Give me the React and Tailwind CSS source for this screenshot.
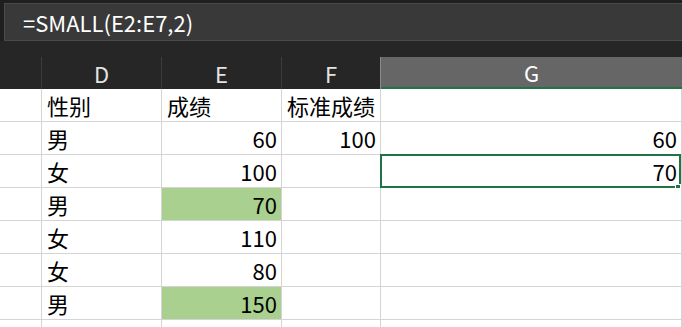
import React from 'react';

const font = { fontFamily: '"Noto Sans CJK SC", "Noto Sans", sans-serif' };

const rows = [
  ['性别', '成绩', '标准成绩', ''],
  ['男', '60', '100', '60'],
  ['女', '100', '', '70'],
  ['男', '70', '', ''],
  ['女', '110', '', ''],
  ['女', '80', '', ''],
  ['男', '150', '', ''],
];

function Cell({ children, right, green, selected }) {
  return (
    <div
      className={`relative h-[33px] border-r border-b border-[#d4d4d4] flex items-center text-[22px] leading-none text-black whitespace-nowrap ${right ? 'justify-end pr-[4px]' : 'pl-[5px]'} ${green ? 'bg-[#a9d08e]' : 'bg-white'}`}
    >
      {children}
      {selected && (
        <>
          <div className="absolute -left-px -top-px right-0 -bottom-px border-2 border-[#217346]" />
          <div className="absolute right-0 -bottom-[3px] w-[6px] h-[6px] bg-[#217346] border border-white" />
        </>
      )}
    </div>
  );
}

export default function App() {
  return (
    <div className="w-[682px] h-[327px] overflow-hidden bg-[#262626]" style={font}>
      {/* Formula bar */}
      <div className="pt-[3px] pl-[4px] bg-[#1f1f1f]">
        <div className="h-[38px] bg-[#393939] border border-r-0 border-[#4a4a4a] flex items-center pl-[18px] text-[22px] leading-none text-white">
          =SMALL(E2:E7,2)
        </div>
      </div>
      <div className="h-[16px] bg-[#262626]" />
      {/* Column headers */}
      <div className="grid grid-cols-[42px_120px_120px_99px_1fr] h-[32px] text-[22px] leading-none">
        <div className="border-r border-[#3c3c3c]" />
        <div className="border-r border-[#3c3c3c] flex items-center justify-center text-[#e3e3e3]">D</div>
        <div className="border-r border-[#3c3c3c] flex items-center justify-center text-[#e3e3e3]">E</div>
        <div className="border-r border-[#8a8a8a] flex items-center justify-center text-[#e3e3e3]">F</div>
        <div className="bg-[#666666] border-b-2 border-[#217346] flex items-center justify-center text-white">G</div>
      </div>
      {/* Grid */}
      <div className="grid grid-cols-[42px_120px_120px_99px_1fr]">
        {rows.map((r, i) => (
          <React.Fragment key={i}>
            <Cell />
            <Cell>{r[0]}</Cell>
            <Cell right={i > 0} green={i === 3 || i === 6}>{r[1]}</Cell>
            <Cell right={i > 0}>{r[2]}</Cell>
            <Cell right selected={i === 2}>{r[3]}</Cell>
          </React.Fragment>
        ))}
        <Cell />
        <Cell />
        <Cell />
        <Cell />
        <Cell />
      </div>
    </div>
  );
}
